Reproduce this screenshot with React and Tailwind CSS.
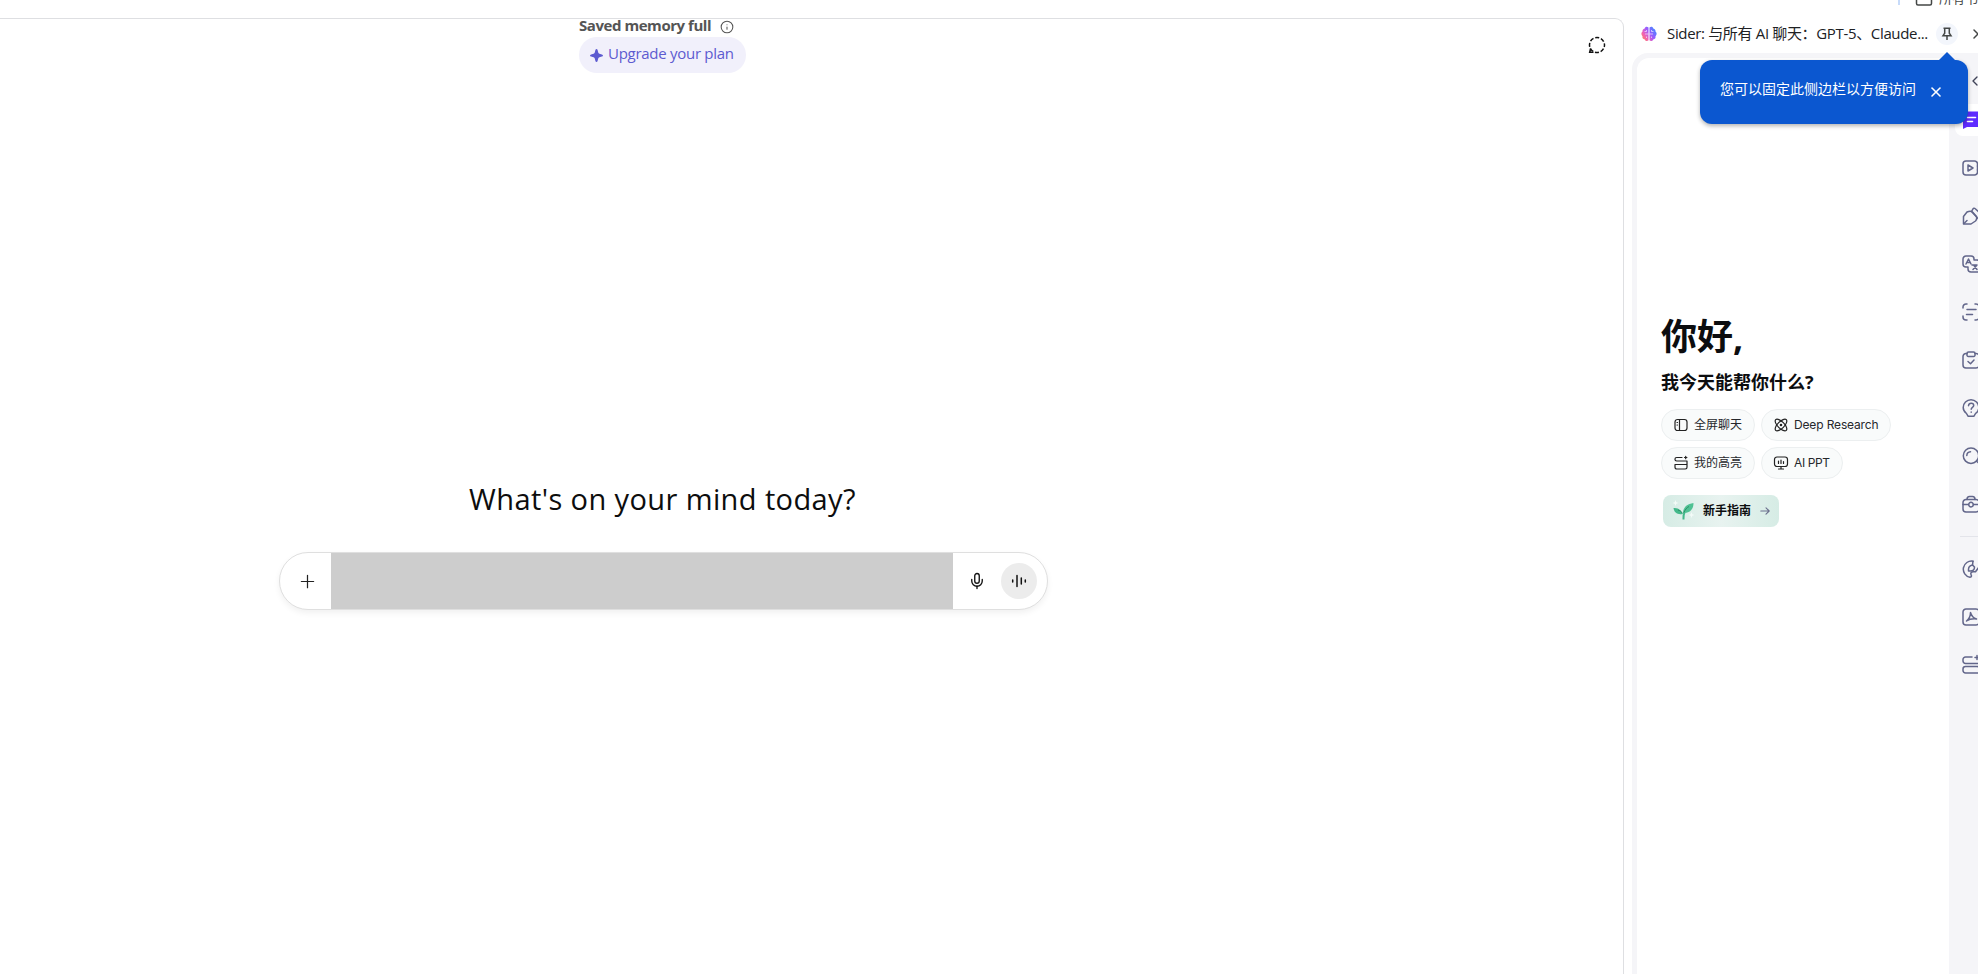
import { Info, Mic, Plus, X, Folder, ChevronLeft } from 'lucide-react';

const railIcons = [
  { id: 'video', paths: ['M4 2h8.500a3 3 0 0 1 3 3v8a3 3 0 0 1-3 3H4a3 3 0 0 1-3-3V5a3 3 0 0 1 3-3z', 'M6 6v6L11 9z', 'M15.500 7l4-3v10l-4-3'] },
  { id: 'write', paths: ['M1.500 17V9.500L5 5c2-1 4-1.200 5.500 0l4 4.500c.5 2 0 3.500-1 4.500l-4.500 3z', 'M2 16.500L5 13.500', 'M9.500 4.500l1.500-2.700c.5-.8 1.500-.8 2-.3L20 8l-4 3.500z'] },
  { id: 'translate', paths: ['M12 4.500V4a3 3 0 0 0-3-3H4a3 3 0 0 0-3 3v5a3 3 0 0 0 3 3h2v2a3 3 0 0 0 3 3h6a3 3 0 0 0 3-3V8a3 3 0 0 0-3-3h-3z', 'M4 9l2.500-5L9 9M5 7.500h3', 'M10 10h5M11 14.500l4-4.500M12 10.500l3 4'] },
  { id: 'ocr', paths: ['M1 5V4a3 3 0 0 1 3-3h1M1 13v1a3 3 0 0 0 3 3h1M13 1h1a3 3 0 0 1 3 3v1M13 17h1a3 3 0 0 0 3-3v-1', 'M5 6.500h9M4.500 11.500h6'] },
  { id: 'tasks', paths: ['M5 2.500H4a3 3 0 0 0-3 3V14a3 3 0 0 0 3 3h10a3 3 0 0 0 3-3V5.500a3 3 0 0 0-3-3h-1', 'M6.500 1h5a1.500 1.500 0 0 1 1.500 1.500v1A1.500 1.500 0 0 1 11.500 5.500h-5A1.500 1.500 0 0 1 5 3.500v-1A1.500 1.500 0 0 1 6.500 1z', 'M6 10.500l2.500 2.200L12 9'] },
  { id: 'ask', paths: ['M9 .8a7.800 7.800 0 0 0-7.800 7.800c0 2.600 1.300 4.500 3.300 5.900L6 17.200h6l1.500-2.700c2-1.400 3.300-3.300 3.300-5.900A7.800 7.800 0 0 0 9 .8z', 'M6.500 6.700C6.700 5 7.800 4.300 9.200 4.300c1.500 0 2.500 1 2.500 2.200 0 1.800-2.500 1.800-2.500 3.700M9.200 13v.2'] },
  { id: 'search', paths: ['M9 1a7.700 7.700 0 1 0 0 15.400A7.700 7.700 0 0 0 9 1z', 'M4.800 8.500a4 4 0 0 1 3.700-3.700', 'M14.500 14l3.500 3.500'] },
  { id: 'tools', paths: ['M4 4.500h10a3 3 0 0 1 3 3V14a3 3 0 0 1-3 3H4a3 3 0 0 1-3-3V7.500a3 3 0 0 1 3-3z', 'M5 4.500C5 2.500 6 1.500 7.500 1.500h3c1.500 0 2.500 1 2.500 3', 'M1 9.500h5.500M11.500 9.500H17', 'M9 7.300a2.300 2.300 0 1 0 0 4.600 2.300 2.300 0 0 0 0-4.600z'] },
];

const bottomIcons = [
  { id: 'palette', paths: ['M11 1.200A7.900 7.900 0 1 0 8 17.300c2 0 1.500-2 1-3-.6-1.500.5-2.500 2-2.500h2.500L17 7', 'M10.500 5C8 5.500 6.500 7 6.500 9.500V11H8.500C11 11 12.500 9.500 12.500 7z', 'M11 1.200l-.5 3.800'] },
  { id: 'pdf', paths: ['M4 1h10a3 3 0 0 1 3 3v10a3 3 0 0 1-3 3H4a3 3 0 0 1-3-3V4a3 3 0 0 1 3-3z', 'M4.500 13C7 11 8.500 8 8.500 4.500 9.500 8 11 10 14.500 11 10 10.500 7.500 11 4.500 13z'] },
  { id: 'notes', paths: ['M10 1H3.500A2.500 2.500 0 0 0 1 3.500V5a2.500 2.500 0 0 0 2.500 2.500H17', 'M3.500 10.500H15a2.500 2.500 0 0 1 2.500 2.500v1.500A2.500 2.500 0 0 1 15 17H3.500A2.500 2.500 0 0 1 1 14.500V13a2.500 2.500 0 0 1 2.500-2.500z', 'M15-.5v4M13 1.500h4'] },
];

function RailIcon({ paths }) {
  return (
    <div className="flex h-12 items-center pl-[13px]">
      <svg width="18" height="18" viewBox="0 0 18 18" fill="none" stroke="#62668a" strokeWidth="1.500" strokeLinecap="round" strokeLinejoin="round" className="shrink-0 overflow-visible">
        {paths.map((d) => <path key={d} d={d} />)}
      </svg>
    </div>
  );
}

function Chip({ icon, label }) {
  return (
    <button className="flex h-8 items-center gap-[6px] rounded-full border border-[#eceff0] bg-[#f9fbfb] px-3 font-['Inter','Noto_Sans_CJK_SC',sans-serif] text-[12px] whitespace-nowrap text-[#26282c]">
      <svg width="14" height="14" viewBox="0 0 14 14" fill="none" stroke="#222" strokeWidth="1.200" strokeLinecap="round" strokeLinejoin="round" className="shrink-0 overflow-visible">
        {icon}
      </svg>
      {label}
    </button>
  );
}

function Composer() {
  return (
    <div className="flex h-[58px] w-[769px] items-center rounded-full border border-[#dfdfdf] bg-white shadow-[0_3px_6px_rgba(0,0,0,0.06)]">
      <button className="flex w-[51px] justify-center pl-[3px]">
        <Plus size={21} strokeWidth={1.4} color="#222" />
      </button>
      <div className="h-full w-[622px] bg-[#cdcdcd]" />
      <button className="flex w-[48px] justify-center">
        <Mic size={18} strokeWidth={1.8} color="#111" />
      </button>
      <button className="flex size-9 items-center justify-center rounded-full bg-[#ececec]">
        <svg width="16" height="16" viewBox="0 0 16 16" stroke="#111" strokeWidth="1.500" strokeLinecap="round">
          <path d="M1.700 7v2M6 2.500v11M10.300 5v6M14.300 7v2" />
        </svg>
      </button>
    </div>
  );
}

function ChatPanel() {
  return (
    <main className="relative flex w-[1624px] flex-col rounded-tr-[9px] border-t border-r border-[#dedfe2] bg-white">
      <div className="flex w-[1325px] flex-col items-center">
        <div className="w-[167px]">
          <div className="flex h-[18px] items-center gap-[9px] pb-[5px] whitespace-nowrap text-[#555]">
            <span className="text-[15px] leading-none font-bold tracking-[-0.45px]">Saved memory full</span>
            <Info size={14} strokeWidth={1.8} className="mt-[3px] shrink-0" />
          </div>
          <button className="flex h-9 w-[167px] items-center gap-[5px] rounded-full bg-[#f1f0fb] pl-[11px] text-[15px] tracking-[-0.28px] whitespace-nowrap text-[#5d5bd0]">
            <svg width="13" height="13" viewBox="0 0 12 12" fill="#5d5bd0" className="shrink-0">
              <path d="M6 0c.5 0 .8.400 1 1l.6 2.300c.2.600.5.900 1.100 1.100L11 5c.6.200 1 .5 1 1s-.4.800-1 1l-2.300.6c-.6.200-.9.500-1.100 1.100L7 11c-.2.600-.5 1-1 1s-.8-.4-1-1l-.6-2.300c-.2-.6-.5-.9-1.100-1.100L1 7c-.6-.2-1-.5-1-1s.4-.8 1-1l2.300-.6c.6-.2.9-.5 1.100-1.100L5 1c.2-.6.5-1 1-1z" />
            </svg>
            <span className="mb-[3px]">Upgrade your plan</span>
          </button>
        </div>
        <h1 className="mt-[406px] h-10 text-[29px] leading-10 tracking-[0.4px] whitespace-nowrap text-[#0d0d0d]">What's on your mind today?</h1>
        <div className="mt-[33px] pl-[2px]"><Composer /></div>
      </div>
      <button className="absolute top-[17px] right-[17px]">
        <svg width="18" height="18" viewBox="0 0 18 18" fill="none" stroke="#111" strokeWidth="1.500">
          <circle cx="9" cy="9" r="7.500" strokeDasharray="4 1.890" strokeDashoffset="2" />
          <path d="M2.600 12.500L1.700 16.200h3.800" />
        </svg>
      </button>
    </main>
  );
}

function PinTooltip() {
  return (
    <div className="absolute top-[60px] left-[1700px] flex h-16 w-[268px] items-center rounded-xl bg-[#0b57d0] pl-5 text-white shadow-[0_2px_4px_rgba(0,0,0,0.3)]">
      <div className="absolute -top-2 left-[239px] border-x-8 border-b-8 border-x-transparent border-b-[#0b57d0]" />
      <span className="mb-[7px] text-[14px] whitespace-nowrap">您可以固定此侧边栏以方便访问</span>
      <X size={16} strokeWidth={2.4} className="ml-3" />
    </div>
  );
}

function SidePanel() {
  return (
    <aside className="flex flex-1 flex-col overflow-hidden pl-2">
      <header className="flex h-[35px] shrink-0 items-center pb-[3px] pl-[9px]">
        <svg width="16" height="16" viewBox="0 0 16 16" fill="none" className="shrink-0">
          <defs>
            <linearGradient id="brain" x1="0" y1="0.900" x2="1" y2="0.200">
              <stop offset="0" stopColor="#ff8a4c" />
              <stop offset="0.300" stopColor="#f060b8" />
              <stop offset="0.600" stopColor="#9a5cff" />
              <stop offset="1" stopColor="#3d8bff" />
            </linearGradient>
          </defs>
          <path fill="url(#brain)" d="M7.500 1.500C6 .3 4 .8 3.700 2.500 2 2.800 1.300 4.300 1.500 5.600 0 6.600 0 9.200 1.500 10.200c-.4 1.700.6 3 2.300 3.200.6 1.800 2.700 2.200 3.700.9zM8.500 1.500C10 .3 12 .8 12.300 2.500c1.700.3 2.400 1.800 2.200 3.100 1.500 1 1.500 3.600 0 4.600.4 1.700-.6 3-2.300 3.200-.6 1.800-2.700 2.200-3.700.9z" />
          <path stroke="#fff" strokeWidth=".6" d="M3.500 5.500h2V4M7.500 8H4M5.500 12v-1.500M12.500 5.500h-2V4M8.500 8H12M10.500 12v-1.500" />
        </svg>
        <span className="mb-[2px] ml-[10px] w-[262px] text-[15px] tracking-[-0.34px] whitespace-nowrap text-[#202124]">Sider: 与所有 AI 聊天：GPT-5、Claude...</span>
        <span className="ml-[8px] flex size-[22px] shrink-0 items-center justify-center rounded-full bg-[#f3f6fc]">
          <svg width="12" height="14" viewBox="0 0 12 14" fill="none" stroke="#444746" strokeWidth="1.500">
            <path d="M2.500 1.200h7M3.700 1.200v5L2 8.700h8L8.300 6.200v-5M6 8.700V13" />
          </svg>
        </span>
        <X size={16} strokeWidth={2.2} color="#444746" className="ml-[12px] shrink-0" />
      </header>
      <div className="flex flex-1 rounded-tl-[16px] bg-[#f5f5f8] pt-[5px] pl-[5px]">
        <section className="w-[312px] shrink-0 rounded-tl-xl bg-white pl-6">
          <h2 className="mt-[252px] h-[54px] text-[36px] leading-[54px] font-bold text-[#0c0d0f]">你好,</h2>
          <p className="mt-[4px] h-7 text-[18px] leading-7 font-bold text-[#0c0d0f]">我今天能帮你什么?</p>
          <div className="mt-[13px] flex w-[240px] flex-wrap gap-[6px]">
            <Chip label="全屏聊天" icon={<><rect x="1" y="1.500" width="12" height="11" rx="2.500" /><path d="M5.500 1.500v11M3 4.500h.5M3 7h.5" /></>} />
            <Chip label={<span className="tracking-[-0.15px]">Deep Research</span>} icon={<><ellipse cx="7" cy="7" rx="7.500" ry="3.300" transform="rotate(45 7 7)" /><ellipse cx="7" cy="7" rx="7.500" ry="3.300" transform="rotate(-45 7 7)" /><circle cx="7" cy="7" r=".7" /></>} />
            <Chip label="我的高亮" icon={<><path d="M8 1.500H2.700a1.700 1.700 0 0 0 0 3.500H13M11.700.3v2.400M10.500 1.500h2.400M13 5v3.500H1M1 8.500v2.800A1.700 1.700 0 0 0 2.700 13h8.600a1.700 1.700 0 0 0 1.700-1.700V8.500" /></>} />
            <Chip label={<span className="tracking-[-0.4px]">AI PPT</span>} icon={<><rect x=".5" y="1" width="13" height="9.500" rx="2.500" /><path d="M7 10.500V13M4.500 13h5M4.500 5v2.500M7 4v3.500M9.500 5.500v2" /></>} />
          </div>
          <button className="mt-4 ml-[2px] flex h-8 w-[116px] items-center rounded-lg bg-linear-to-r from-[#d6ece5] via-[#e8f3f0] to-[#d6ece5] pl-[10px] text-[12px] font-bold whitespace-nowrap text-[#0c0d0f]">
            <svg width="21" height="18" viewBox="0 0 21 18" className="shrink-0 overflow-visible">
              <path fill="#f4fbf8" d="M2.500-2l.8 2.200 2.200.8-2.200.8-.8 2.200-.8-2.200L-.5 1l2.200-.8zM18.500 10l.8 2.200 2.200.8-2.200.8-.8 2.200-.8-2.200-2.200-.8 2.200-.8z" />
              <path fill="#4fc193" d="M10 11C10 7 12.500 2 20.500 1c0 6-3 10-10.500 10z" />
              <path fill="#43b88a" d="M9.500 12C8.500 8 5 5.500.5 6c.5 4.500 4 7 9 6z" />
              <path stroke="#43b88a" strokeWidth="2" fill="none" d="M10.500 17.500c0-3-.2-5 1-7" />
              <path stroke="#24805b" strokeWidth=".8" fill="none" d="M11 10.500c1-3 3-5 5-6M9.500 11.500C8.500 9.500 7 8.500 5 8" />
            </svg>
            <span className="ml-[9px]">新手指南</span>
            <svg width="10" height="10" viewBox="0 0 10 10" fill="none" stroke="#6b6f8d" strokeWidth="1.100" strokeLinecap="round" strokeLinejoin="round" className="ml-[9px]">
              <path d="M.8 5h8.400M6 1.800L9.200 5 6 8.200" />
            </svg>
          </button>
        </section>
        <nav className="w-[29px] overflow-hidden">
          <div className="flex h-[46px] items-center pl-[18px]">
            <ChevronLeft size={16} strokeWidth={2} color="#3f4257" className="shrink-0" />
          </div>
          <div className="ml-[6px] flex h-8 w-10 items-center rounded-lg bg-white pl-[7px]">
            <svg width="18" height="18" viewBox="0 0 18 18" className="shrink-0">
              <path fill="#5f2bff" d="M4 .5h11a3 3 0 0 1 3 3V13a3 3 0 0 1-3 3H5l-4 2V3.500a3 3 0 0 1 3-3z" />
              <path stroke="#fff" strokeWidth="1.600" strokeLinecap="round" d="M5.500 6.500h8M5.500 10.500h5" />
            </svg>
          </div>
          <div className="mt-2">
            {railIcons.map((icon) => <RailIcon key={icon.id} paths={icon.paths} />)}
          </div>
          <div className="mt-2 mb-2 ml-[11px] h-px bg-[#e3e4ea]" />
          {bottomIcons.map((icon) => <RailIcon key={icon.id} paths={icon.paths} />)}
        </nav>
      </div>
    </aside>
  );
}

export default function App() {
  return (
    <div className="relative flex h-[974px] w-[1978px] flex-col overflow-hidden bg-white font-['Open_Sans','Noto_Sans_CJK_SC',sans-serif]">
      <div className="flex h-[18px] shrink-0 items-start justify-end overflow-hidden">
        <div className="h-[5px] w-[2px] bg-[#c7dbfa]" />
        <div className="flex h-4 w-[78px] -translate-y-[9px] items-center gap-[6px] pl-[15px] text-[13px] whitespace-nowrap text-[#444746]">
          <Folder size={18} strokeWidth={2} className="shrink-0" />
          <span>所有书签</span>
        </div>
      </div>
      <div className="flex flex-1">
        <ChatPanel />
        <SidePanel />
      </div>
      <PinTooltip />
    </div>
  );
}
